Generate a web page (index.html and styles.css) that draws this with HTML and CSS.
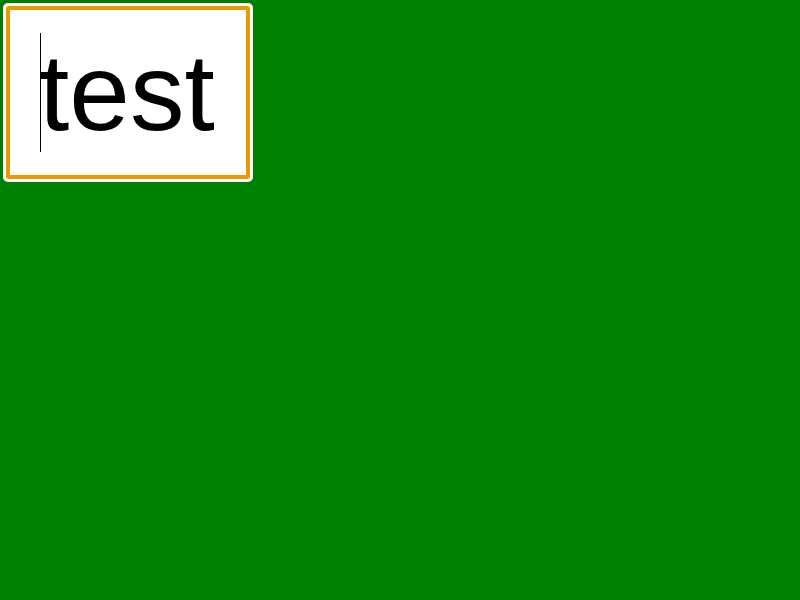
FILE: index.html
```html
<!DOCTYPE html>
<html>
<head>
<meta charset="utf-8">
<link rel="stylesheet" href="styles.css">
</head>
<body>
<div class="ring">
  <div class="field">
    <div class="value"><span class="caret"></span>test</div>
  </div>
</div>
</body>
</html>
```
FILE: styles.css
```css
html, body {
  margin: 0;
  padding: 0;
  background: #008000;
  width: 800px;
  height: 600px;
}
.ring {
  margin: 3px;
  width: 244px;
  height: 173px;
  padding: 3px;
  background: #ffffff;
  border-radius: 5px;
}
.field {
  box-sizing: border-box;
  width: 244px;
  height: 173px;
  border: 4px solid #e89a00;
  border-radius: 3px;
  background: #ffffff;
  padding: 23px 0 0 29px;
}
.value {
  position: relative;
  font-family: "Liberation Sans", Arial, sans-serif;
  font-size: 109px;
  line-height: 119px;
  height: 119px;
  color: #000000;
  white-space: nowrap;
}
.caret {
  position: absolute;
  left: 1px;
  top: 0;
  width: 1px;
  height: 119px;
  background: #000000;
}
```
